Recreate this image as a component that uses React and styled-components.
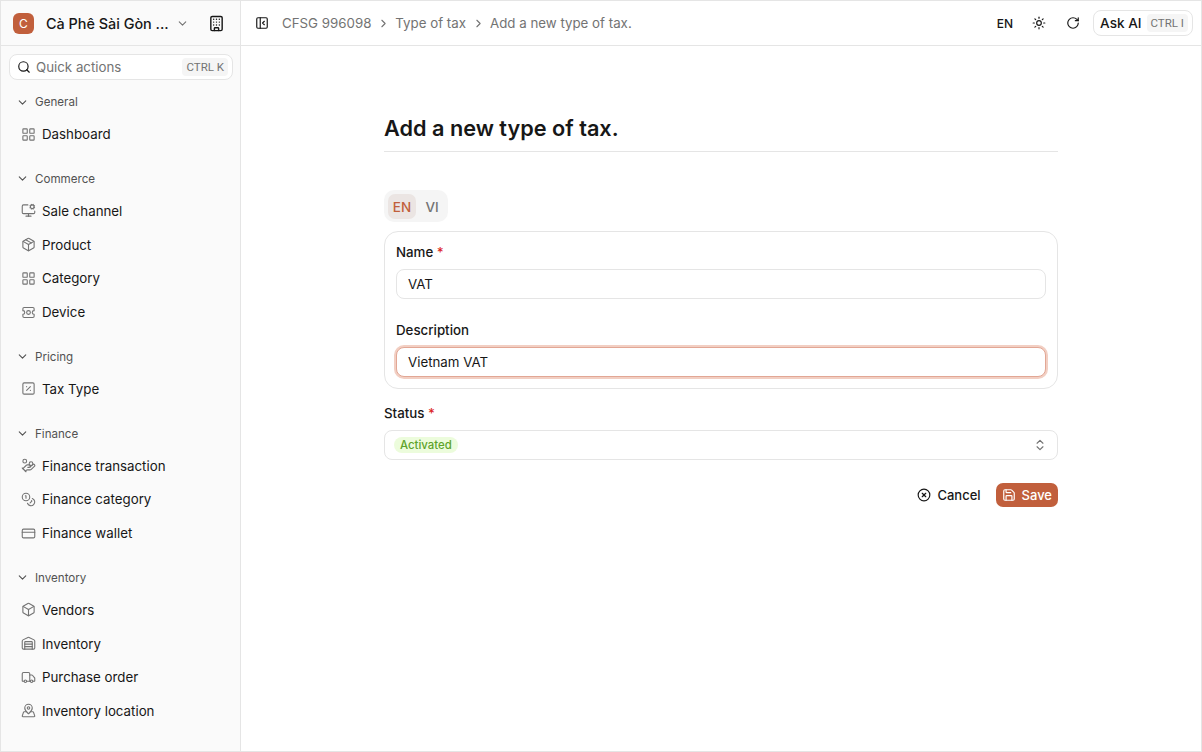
import React from 'react'
import styled, { createGlobalStyle } from 'styled-components'
import {
  Building, ChevronDown, ChevronRight, ChevronsUpDown, CircleX, Box, CreditCard, HandCoins, Coins, LayoutGrid,
  MapPinned, Package, PanelLeftClose, RotateCw, Save, Search, SquarePercent, Sun, Truck, Warehouse, MonitorCog,
} from 'lucide-react'

const DeviceIcon = ({ size, color, strokeWidth = 2 }) => (
  <svg width={size} height={size} viewBox="0 0 24 24" fill="none" stroke={color} strokeWidth={strokeWidth} strokeLinecap="round" strokeLinejoin="round">
    <path d="M3 9V6a2 2 0 0 1 2-2h14a2 2 0 0 1 2 2v3a3 3 0 0 0 0 6v3a2 2 0 0 1-2 2H5a2 2 0 0 1-2-2v-3a3 3 0 0 0 0-6Z" />
    <circle cx="12" cy="12" r="3" />
  </svg>
)

const groups = [
  { title: 'General', items: [{ label: 'Dashboard', icon: LayoutGrid }] },
  {
    title: 'Commerce',
    items: [
      { label: 'Sale channel', icon: MonitorCog },
      { label: 'Product', icon: Package },
      { label: 'Category', icon: LayoutGrid },
      { label: 'Device', icon: DeviceIcon },
    ],
  },
  { title: 'Pricing', items: [{ label: 'Tax Type', icon: SquarePercent }] },
  {
    title: 'Finance',
    items: [
      { label: 'Finance transaction', icon: HandCoins },
      { label: 'Finance category', icon: Coins },
      { label: 'Finance wallet', icon: CreditCard },
    ],
  },
  {
    title: 'Inventory',
    items: [
      { label: 'Vendors', icon: Box },
      { label: 'Inventory', icon: Warehouse },
      { label: 'Purchase order', icon: Truck },
      { label: 'Inventory location', icon: MapPinned },
    ],
  },
]

const App = () => {
  return (
    <Shell>
      <GlobalStyle />
      <Sidebar>
        <StoreBar>
          <StoreLogo>C</StoreLogo>
          <StoreName>Cà Phê Sài Gòn ...</StoreName>
          <ChevronDown size={13} color="#737373" />
          <StoreSwitch><Building size={17} color="#171717" /></StoreSwitch>
        </StoreBar>
        <QuickActions>
          <Search size={14} color="#171717" />
          <QuickLabel>Quick actions</QuickLabel>
          <Kbd>CTRL K</Kbd>
        </QuickActions>
        <Nav>
          {groups.map((group) => (
            <Group key={group.title}>
              <GroupTitle>
                <ChevronDown size={13} color="#525252" />
                {group.title}
              </GroupTitle>
              {group.items.map(({ label, icon: Icon }) => (
                <NavItem key={label}>
                  <Icon size={15} color="#737373" strokeWidth={1.75} />
                  {label}
                </NavItem>
              ))}
            </Group>
          ))}
        </Nav>
      </Sidebar>
      <Main>
        <Header>
          <PanelLeftClose size={14} color="#171717" />
          <Crumbs>
            <span>CFSG 996098</span>
            <ChevronRight size={13} color="#737373" />
            <span>Type of tax</span>
            <ChevronRight size={13} color="#737373" />
            <span>Add a new type of tax.</span>
          </Crumbs>
          <HeaderActions>
            <Lang>EN</Lang>
            <Sun size={14} color="#171717" />
            <RotateCw size={14} color="#171717" />
            <AskAi>
              Ask AI
              <Kbd>CTRL I</Kbd>
            </AskAi>
          </HeaderActions>
        </Header>
        <Content>
          <Form>
            <Title>Add a new type of tax.</Title>
            <Tabs>
              <Tab $active>EN</Tab>
              <Tab>VI</Tab>
            </Tabs>
            <Card>
              <Field>
                <Label>Name <Required>*</Required></Label>
                <Input>VAT</Input>
              </Field>
              <Field>
                <Label>Description</Label>
                <Input $focused>Vietnam VAT</Input>
              </Field>
            </Card>
            <StatusField>
              <Label>Status <Required>*</Required></Label>
              <Select>
                <Badge>Activated</Badge>
                <ChevronsUpDown size={14} color="#737373" />
              </Select>
            </StatusField>
            <Actions>
              <GhostButton><CircleX size={14} color="#171717" />Cancel</GhostButton>
              <PrimaryButton><Save size={14} color="#fff" />Save</PrimaryButton>
            </Actions>
          </Form>
        </Content>
      </Main>
    </Shell>
  )
}

export default App

const GlobalStyle = createGlobalStyle`
* { box-sizing: border-box; }
body {
  margin: 0;
  background: #fff;
  font-family: Inter, "Liberation Sans", sans-serif;
  color: #171717;
}
`

const Shell = styled.div`
display: flex;
width: 1202px;
height: 752px;
border: 1px solid #e5e5e5;
overflow: hidden;
`

const Sidebar = styled.aside`
width: 240px;
flex-shrink: 0;
background: #fafafa;
border-right: 1px solid #e5e5e5;
display: flex;
flex-direction: column;
overflow: hidden;
`

const StoreBar = styled.div`
height: 45px;
flex-shrink: 0;
display: flex;
align-items: center;
padding: 0 15px 0 12px;
border-bottom: 1px solid #e5e5e5;
`

const StoreLogo = styled.div`
width: 21px;
height: 21px;
border-radius: 6px;
background: #c15f3c;
color: #fff;
font-size: 12px;
display: flex;
align-items: center;
justify-content: center;
`

const StoreName = styled.div`
margin-left: 12px;
width: 130px;
font-size: 14.4px;
font-weight: 500;
white-space: nowrap;
`

const StoreSwitch = styled.div`
display: flex;
margin-left: auto;
`

const QuickActions = styled.div`
height: 26px;
margin: 8px 7px 0 8px;
padding: 0 4px 0 7px;
display: flex;
align-items: center;
background: #fff;
border: 1px solid #e5e5e5;
border-radius: 8px;
flex-shrink: 0;
`

const QuickLabel = styled.span`
margin-left: 5px;
font-size: 13.3px;
color: #737373;
`

const Kbd = styled.span`
margin-left: auto;
padding: 0 4px;
height: 18px;
display: inline-flex;
align-items: center;
background: #f5f5f5;
border-radius: 4px;
font-family: Roboto, sans-serif;
font-size: 11.5px;
font-weight: 400;
color: #737373;
`

const Nav = styled.nav`
display: flex;
flex-direction: column;
gap: 12.85px;
margin-top: 7px;
`

const Group = styled.div`
display: flex;
flex-direction: column;
`

const GroupTitle = styled.div`
height: 30.3px;
padding-left: 15px;
display: flex;
align-items: center;
gap: 6px;
font-size: 11.6px;
color: #525252;
`

const NavItem = styled.div`
height: 33.7px;
padding-left: 20px;
display: flex;
align-items: center;
gap: 6px;
font-size: 13.3px;
color: #171717;
`

const Main = styled.main`
flex: 1;
min-width: 0;
display: flex;
flex-direction: column;
`

const Header = styled.header`
height: 45px;
flex-shrink: 0;
display: flex;
align-items: center;
padding: 0 8px 0 14px;
border-bottom: 1px solid #e5e5e5;
`

const Crumbs = styled.div`
margin-left: 13px;
display: flex;
align-items: center;
gap: 5.5px;
font-size: 13.3px;
color: #737373;
`

const HeaderActions = styled.div`
margin-left: auto;
display: flex;
align-items: center;
gap: 20px;
`

const Lang = styled.span`
margin-right: -1px;
font-size: 12px;
font-weight: 500;
`

const AskAi = styled.div`
height: 26px;
margin-left: -7px;
padding: 0 4px 0 6px;
display: flex;
align-items: center;
gap: 5px;
border: 1px solid #e5e5e5;
border-radius: 8px;
font-size: 13.6px;
font-weight: 500;
`

const Content = styled.div`
flex: 1;
display: flex;
justify-content: center;
`

const Form = styled.div`
width: 674px;
padding-top: 66px;
display: flex;
flex-direction: column;
`

const Title = styled.h1`
margin: 0;
height: 40px;
font-size: 21.7px;
line-height: 32px;
font-weight: 600;
border-bottom: 1px solid #e5e5e5;
`

const Tabs = styled.div`
margin-top: 38px;
width: 64px;
height: 32px;
padding: 4px 2px 3px 4px;
display: flex;
gap: 2px;
background: #f5f5f5;
border-radius: 10px;
`

const Tab = styled.div`
width: 28px;
height: 25px;
display: flex;
align-items: center;
justify-content: center;
border-radius: 7px;
font-size: 13.5px;
font-weight: 500;
color: ${(p) => (p.$active ? '#c15f3c' : '#737373')};
background: ${(p) => (p.$active ? '#ebe5e3' : 'transparent')};
`

const Card = styled.div`
margin-top: 9px;
padding: 11px;
height: 158px;
border: 1px solid #e5e5e5;
border-radius: 14px;
display: flex;
flex-direction: column;
gap: 22px;
`

const Field = styled.div`
display: flex;
flex-direction: column;
gap: 8px;
`

const StatusField = styled(Field)`
margin-top: 15px;
`

const Label = styled.div`
height: 18px;
font-size: 13.3px;
line-height: 18px;
font-weight: 500;
`

const Required = styled.span`
color: #dc2626;
`

const Input = styled.div`
height: 30px;
padding: 0 11px;
display: flex;
align-items: center;
font-size: 13.3px;
background: #fff;
border: 1px solid ${(p) => (p.$focused ? '#e2a795' : '#e5e5e5')};
border-radius: 8px;
box-shadow: ${(p) => (p.$focused ? '0 0 0 2px #f2cfc3' : 'none')};
`

const Select = styled.div`
height: 30px;
padding: 0 10px 0 9px;
display: flex;
align-items: center;
justify-content: space-between;
border: 1px solid #e5e5e5;
border-radius: 8px;
`

const Badge = styled.span`
height: 16px;
padding: 0 6px;
display: inline-flex;
align-items: center;
background: #ecfcdc;
border-radius: 8px;
font-size: 11.4px;
font-weight: 500;
color: #5ea32a;
`

const Actions = styled.div`
margin-top: 23px;
display: flex;
justify-content: flex-end;
align-items: center;
gap: 15px;
`

const GhostButton = styled.div`
display: flex;
align-items: center;
gap: 6px;
font-size: 13px;
font-weight: 500;
`

const PrimaryButton = styled(GhostButton)`
height: 24px;
padding: 0 6px;
background: #c15f3c;
color: #fff;
border-radius: 7px;
`
